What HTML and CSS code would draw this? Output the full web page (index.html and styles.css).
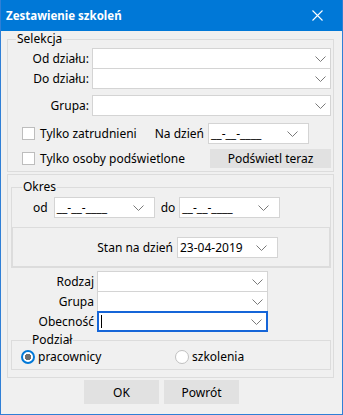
FILE: index.html
```html
<!DOCTYPE html>
<html lang="pl">

<head>
    <meta charset="UTF-8">
    <title>Zestawienie szkoleń</title>
    <link rel="stylesheet" href="styles.css">
</head>

<body>
    <div class="window">
        <div class="titlebar">
            <span class="title">Zestawienie szkoleń</span>
            <svg class="close" width="11" height="11" viewBox="0 0 11 11">
                <path d="M0.5 0.5 L10.5 10.5 M10.5 0.5 L0.5 10.5" stroke="#fff" stroke-width="1.1" fill="none" />
            </svg>
        </div>
        <div class="content">
            <!-- Selekcja -->
            <fieldset class="group selekcja">
                <legend>Selekcja</legend>
                <div class="row">
                    <label class="lbl">Od działu:</label>
                    <div class="combo">
                        <span></span>
                        <svg class="chev" width="11" height="6" viewBox="0 0 11 6"><polyline points="0.5,0.5 5.5,5.5 10.5,0.5" /></svg>
                    </div>
                </div>
                <div class="row joined">
                    <label class="lbl">Do działu:</label>
                    <div class="combo">
                        <span></span>
                        <svg class="chev" width="11" height="6" viewBox="0 0 11 6"><polyline points="0.5,0.5 5.5,5.5 10.5,0.5" /></svg>
                    </div>
                </div>
                <div class="row spaced">
                    <label class="lbl">Grupa:</label>
                    <div class="combo">
                        <span></span>
                        <svg class="chev" width="11" height="6" viewBox="0 0 11 6"><polyline points="0.5,0.5 5.5,5.5 10.5,0.5" /></svg>
                    </div>
                </div>

                <div class="check-row first">
                    <div class="check"><span class="box"></span>Tylko zatrudnieni</div>
                    <span class="na-dzien">Na dzień</span>
                    <div class="date">
                        <span>__-__-____</span>
                        <svg class="chev" width="11" height="6" viewBox="0 0 11 6"><polyline points="0.5,0.5 5.5,5.5 10.5,0.5" /></svg>
                    </div>
                </div>
                <div class="check-row second">
                    <div class="check"><span class="box"></span>Tylko osoby podświetlone</div>
                    <button class="btn btn-wide">Podświetl teraz</button>
                </div>
            </fieldset>

            <div class="panel">
                <!-- Okres -->
                <fieldset class="group okres">
                    <legend>Okres</legend>
                    <div class="range">
                        <span class="od">od</span>
                        <div class="date">
                            <span>__-__-____</span>
                            <svg class="chev" width="11" height="6" viewBox="0 0 11 6"><polyline points="0.5,0.5 5.5,5.5 10.5,0.5" /></svg>
                        </div>
                        <span class="do">do</span>
                        <div class="date">
                            <span>__-__-____</span>
                            <svg class="chev" width="11" height="6" viewBox="0 0 11 6"><polyline points="0.5,0.5 5.5,5.5 10.5,0.5" /></svg>
                        </div>
                    </div>
                    <div class="stan">
                        <span class="stan-lbl">Stan na dzień</span>
                        <div class="date">
                            <span>23-04-2019</span>
                            <svg class="chev" width="11" height="6" viewBox="0 0 11 6"><polyline points="0.5,0.5 5.5,5.5 10.5,0.5" /></svg>
                        </div>
                    </div>
                </fieldset>

                <div class="lower">
                    <div class="row">
                        <label class="lbl">Rodzaj</label>
                        <div class="combo">
                            <span></span>
                            <svg class="chev" width="11" height="6" viewBox="0 0 11 6"><polyline points="0.5,0.5 5.5,5.5 10.5,0.5" /></svg>
                        </div>
                    </div>
                    <div class="row joined">
                        <label class="lbl">Grupa</label>
                        <div class="combo">
                            <span></span>
                            <svg class="chev" width="11" height="6" viewBox="0 0 11 6"><polyline points="0.5,0.5 5.5,5.5 10.5,0.5" /></svg>
                        </div>
                    </div>
                    <div class="row joined">
                        <label class="lbl">Obecność</label>
                        <div class="combo focus">
                            <span class="caret"></span>
                            <svg class="chev" width="11" height="6" viewBox="0 0 11 6"><polyline points="0.5,0.5 5.5,5.5 10.5,0.5" /></svg>
                        </div>
                    </div>
                </div>

                <!-- Podział -->
                <fieldset class="group podzial">
                    <legend>Podział</legend>
                    <div class="radios">
                        <div class="radio-opt"><span class="radio checked"></span>pracownicy</div>
                        <div class="radio-opt"><span class="radio"></span>szkolenia</div>
                    </div>
                </fieldset>
            </div>

            <div class="buttons">
                <button class="btn">OK</button>
                <button class="btn">Powrót</button>
            </div>
        </div>
    </div>
</body>

</html>
```

FILE: styles.css
```css
* {
    margin: 0;
    padding: 0;
    box-sizing: border-box;
}

body {
    font-family: "Noto Sans", "Open Sans", sans-serif;
    font-size: 12px;
    line-height: 16px;
    color: #000;
    background: #fff;
    white-space: nowrap;
}

.window {
    width: 343px;
    height: 415px;
    border: 1px solid #2f7fd6;
    border-top: none;
    background: #f0f0f0;
}

.titlebar {
    height: 31px;
    background: #0078d7;
    color: #fff;
    display: flex;
    align-items: center;
    justify-content: space-between;
    padding: 0 19px 0 5px;
}

.title {
    font-weight: 700;
    font-size: 11.5px;
}

.close {
    display: block;
}

.content {
    padding: 0 8px 0 6px;
}

/* group boxes */
.group {
    border: 1px solid #dcdcdc;
    min-width: 0;
}

.group legend {
    padding: 0 1px;
    line-height: 16px;
}

.selekcja {
    padding: 1px 2px 3px 0;
}

.selekcja legend {
    margin-left: 8px;
}

.row {
    display: flex;
    align-items: center;
}

.row.joined {
    margin-top: -1px;
}

.row.spaced {
    margin-top: 6px;
}

.selekcja .lbl {
    width: 81px;
    margin-right: 3px;
    text-align: right;
}

.combo,
.date {
    height: 21px;
    background: #fff;
    border: 1px solid #d4d4d4;
    display: flex;
    align-items: center;
    justify-content: space-between;
    padding: 0 4px 0 2px;
}

.combo {
    flex: 1;
}

.chev {
    display: block;
    fill: none;
    stroke: #7a7a7a;
    stroke-width: 1;
}

.date {
    width: 101px;
    flex: none;
    padding-right: 10px;
}

/* checkboxes */
.check-row {
    display: flex;
    align-items: center;
    padding-left: 14px;
}

.check-row.first {
    margin-top: 7px;
    padding-right: 22px;
}

.check-row.second {
    margin-top: 5px;
}

.check {
    display: flex;
    align-items: center;
    flex: 1;
}

.box {
    width: 13px;
    height: 13px;
    border: 1px solid #bdbdbd;
    background: #fff;
    margin-right: 5px;
}

.na-dzien {
    margin-right: 4px;
}

.btn {
    font-family: inherit;
    font-size: 12px;
    color: #000;
    background: #e1e1e1;
    border: 1px solid #e1e1e1;
    width: 75px;
    height: 24px;
}

.btn-wide {
    width: 121px;
    height: 19px;
    line-height: 15px;
}

/* middle panel */
.panel {
    margin-top: 2px;
    border: 1px solid #dcdcdc;
    padding: 0 2px 7px 3px;
}

.okres {
    margin-top: 4px;
    padding: 0;
}

.okres legend,
.podzial legend {
    margin-left: 10px;
}

.range {
    display: flex;
    align-items: center;
    padding: 2px 0 0 21px;
}

.od {
    margin-right: 6px;
}

.do {
    margin: 0 4px 0 6px;
}

.stan {
    margin-top: 9px;
    border: 1px solid #dcdcdc;
    display: flex;
    align-items: center;
    padding: 9px 0 8px 0;
}

.stan-lbl {
    width: 160px;
    margin-right: 4px;
    text-align: right;
}

.lower {
    margin: 3px 0 0 -3px;
}

.lower .lbl {
    width: 86px;
    margin-right: 3px;
    text-align: right;
}

.lower .combo {
    flex: none;
    width: 171px;
}

.combo.focus {
    border: 2px solid #1565d8;
    padding-left: 2px;
}

.caret {
    width: 1px;
    height: 13px;
    background: #000;
}

/* radios */
.podzial {
    padding: 2px 0 5px 9px;
}

.radios {
    display: flex;
    align-items: center;
    height: 14px;
}

.radio-opt {
    display: flex;
    align-items: center;
    width: 154px;
}

.radio {
    width: 14px;
    height: 14px;
    border: 1px solid #c0c0c0;
    border-radius: 50%;
    background: #fff;
    margin-right: 3px;
}

.radio.checked {
    border: 2px solid #0078d7;
    background: radial-gradient(circle, #6e6e6e 0 3px, #fff 3.5px);
}

.buttons {
    display: flex;
    gap: 5px;
    margin: 2px 0 0 77px;
}
```
